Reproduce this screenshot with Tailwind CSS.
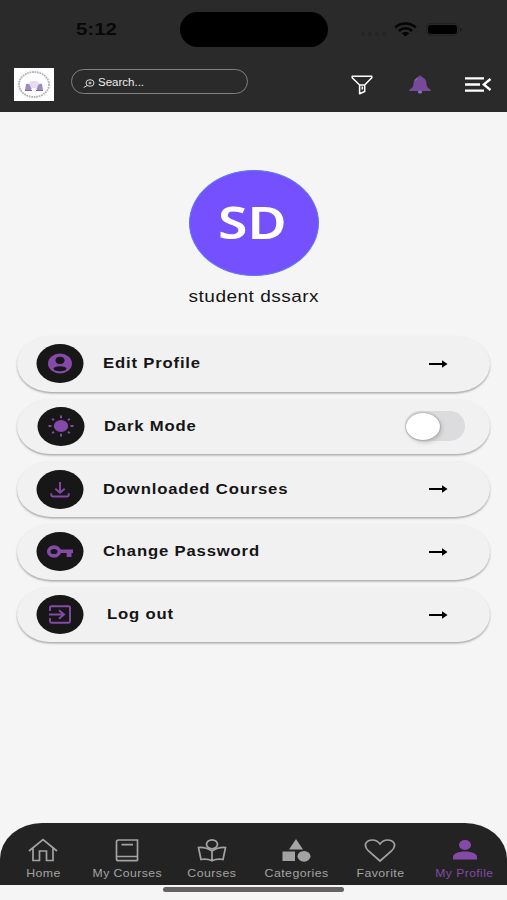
<!DOCTYPE html>
<html lang="en">
<head>
    <meta charset="UTF-8">
    <meta name="viewport" content="width=device-width, initial-scale=1.0">
    <title>My Profile</title>
    <script src="https://cdn.jsdelivr.net/npm/@tailwindcss/browser@4"></script>
</head>
<body class="w-[507px] h-[900px] overflow-hidden flex flex-col bg-[#f5f5f5] font-['Liberation_Sans',Arial,sans-serif] text-[#151515]">
    <!-- Status bar + toolbar -->
    <header class="h-[111.5px] shrink-0 bg-[#2a2a2a]">
        <div class="h-[59px] flex items-center pl-[76px]">
            <span class="w-[104px] text-[17px] leading-none font-bold text-[#080808]"><span class="inline-block origin-left scale-x-[1.2]">5:12</span></span>
            <div class="w-[148px] h-[35px] rounded-full bg-black"></div>
            <div class="flex gap-[3px] ml-[33px] mt-2 w-[30px]">
                <i class="w-1 h-1 rounded-full bg-[#242424]"></i>
                <i class="w-1 h-1 rounded-full bg-[#242424]"></i>
                <i class="w-1 h-1 rounded-full bg-[#242424]"></i>
                <i class="w-1 h-1 rounded-full bg-[#242424]"></i>
            </div>
            <svg class="w-[23px] h-[15px] ml-[3px]" viewBox="0 0 23 15" fill="none" stroke="#050505" stroke-width="2.6">
                <path d="M1.2 5.5C7 .2 16 .2 21.800 5.500M4.900 9C8.700 5.400 14.300 5.400 18.100 9"/>
                <path d="M11.500 14.500 7.600 11.300C9.800 9.500 13.200 9.500 15.400 11.300Z" fill="#050505" stroke="none"/>
            </svg>
            <div class="ml-[9px] w-[33px] h-[13px] rounded-[5px] border border-[#202020] p-px"><div class="w-full h-full rounded-[3px] bg-black"></div></div>
            <div class="ml-px w-[2px] h-1 rounded-r bg-[#1c1c1c]"></div>
        </div>
        <div class="h-[51px] flex items-center pl-[14px]">
            <svg class="w-10 h-[33px]" viewBox="0 0 40 33" fill="none">
                <path fill="#fff" d="M0 0h40v33H0z"/>
                <ellipse cx="20" cy="16.500" rx="15" ry="12.500" stroke="#b5b1bb" stroke-width="1.800" stroke-dasharray="1.800 .7"/>
                <ellipse cx="20" cy="16.500" rx="17" ry="14.500" stroke="#ececf0" stroke-width=".6"/>
                <path d="M12 16c2-1 4 0 6 3l-1 3h-6zM28 16c-2-1-4 0-6 3l1 3h6z" fill="#9c8bc4"/>
                <path d="M15 15c2-3 8-3 10 0l-2 5h-6z" fill="#e6dcf1"/>
                <path d="M11 22.500h7M22 22.500h7" stroke="#756b94"/>
            </svg>
            <div class="ml-[17px] mb-[6px] w-[177px] h-[25px] rounded-full border border-[#808080] flex items-center pl-[11px] pt-[3px]">
                <svg class="w-[12px] h-[9px]" viewBox="0 0 12 9" fill="none" stroke="#ddd">
                    <ellipse cx="7" cy="4" rx="4" ry="3.300"/>
                    <path d="M4 6.500.6 8.700M5.500 4h3M7 2.700v2.600"/>
                </svg>
                <span class="ml-[3px] text-[10px] leading-none text-[#ededed]"><span class="inline-block origin-left scale-x-[1.15]">Search...</span></span>
            </div>
            <svg class="ml-[103px] w-[22px] h-[20px]" viewBox="0 0 22 20" fill="none" stroke="#fff" stroke-width="1.500" stroke-linejoin="round">
                <path d="M1.200 1.300h19.600v1.500L13.700 10v6.500L8.600 18.800V10L1.200 2.800zM8.600 10h5.100M11.300 11.500v3"/>
            </svg>
            <svg class="ml-[36px] w-[22px] h-[19px]" viewBox="0 0 22 19">
                <path fill="#77499a" d="M9.200 2C9.200.3 12.800.3 12.800 2 16 3 17.300 5.200 17.400 8.500 17.500 11.500 19 13.500 21.500 14.600V16H.5V14.600C3 13.500 4.500 11.500 4.600 8.500 4.700 5.200 6 3 9.200 2Z"/>
                <ellipse cx="11" cy="17" rx="2.200" ry="1.600" fill="#8b73c0"/>
                <path d="M6.500 5.500C7 4.200 8 3.500 9 3.300" stroke="#9a7abb" fill="none"/>
            </svg>
            <svg class="ml-[33px] w-[28px] h-[17px]" viewBox="0 0 28 17" fill="none" stroke="#fff" stroke-width="2.300">
                <path d="M1 2.300h19M1 8.500h15M1 14.700h19M26.500 3l-6.700 5.500 6.700 5.500"/>
            </svg>
        </div>
    </header>

    <!-- Profile -->
    <section class="h-[224.5px] shrink-0 pt-[58px] flex flex-col items-center">
        <div class="w-[130px] h-[106.5px] rounded-[50%] bg-[#7450ff] border border-[#5c78f5] flex items-center justify-center text-white font-['Noto_Sans'] font-semibold text-[45px] leading-none">
            <span class="inline-block scale-x-[1.19] -translate-x-[1.5px] -translate-y-px">SD</span>
        </div>
        <p class="mt-[12px] text-[16px] leading-[18px] tracking-[.4px]"><span class="inline-block scale-x-[1.19]">student dssarx</span></p>
    </section>

    <!-- Settings -->
    <main class="px-[17px] flex flex-col gap-[7.200px] text-[14px] font-bold tracking-[.7px]">
        <div class="h-[55.500px] shrink-0 flex items-center pl-[18.500px] pr-[42px] rounded-[34px/28px] bg-[#f1f1f1] shadow-[0_1.500px_2px_#aaa]">
            <svg class="w-[48px] h-[39px]" viewBox="0 0 48 39" fill="none">
                <ellipse cx="24" cy="19.500" rx="23.500" ry="19.500" fill="#171717"/>
                <ellipse cx="24" cy="19.500" rx="12" ry="10" fill="#8549a8"/>
                <ellipse cx="24" cy="16.300" rx="4.500" ry="3.600" fill="#171717"/>
                <ellipse cx="24" cy="24.800" rx="6.500" ry="2.500" fill="#171717"/>
            </svg>
            <span class="ml-[19px] flex-1"><span class="inline-block origin-left scale-x-[1.19]">Edit Profile</span></span>
            <svg class="w-5 h-2" viewBox="0 0 20 8"><path d="M1 3h13V.3L19.500 4 14 7.700V5H1z"/></svg>
        </div>
        <div class="h-[55.500px] shrink-0 flex items-center pl-[19.500px] pr-[25px] rounded-[34px/28px] bg-[#f1f1f1] shadow-[0_1.500px_2px_#aaa]">
            <svg class="w-[48px] h-[39px]" viewBox="0 0 48 39" fill="none">
                <ellipse cx="24" cy="19.500" rx="23.500" ry="19.500" fill="#171717"/>
                <ellipse cx="24" cy="19" rx="7.200" ry="6" fill="#8549a8"/>
                <path d="M24 8.500v2.700M24 26.800v2.700M11.500 19h3M33.500 19h3M15.200 11.800l1.800 1.500M31 24.700l1.800 1.500M15.200 26.200l1.800-1.500M31 13.300l1.800-1.500" stroke="#8549a8" stroke-width="2"/>
            </svg>
            <span class="ml-[19px] flex-1"><span class="inline-block origin-left scale-x-[1.19]">Dark Mode</span></span>
            <div class="w-[60px] h-[30px] rounded-full bg-[#dcdcde] flex items-center">
                <div class="w-[34px] h-[27px] rounded-[50%] bg-white shadow-[0_0_2px_#777,2px_2px_4px_#bbb] ml-px"></div>
            </div>
        </div>
        <div class="h-[55.500px] shrink-0 flex items-center pl-[18.500px] pr-[42px] rounded-[34px/28px] bg-[#f1f1f1] shadow-[0_1.500px_2px_#aaa]">
            <svg class="w-[48px] h-[39px]" viewBox="0 0 48 39" fill="none" stroke="#8549a8" stroke-width="1.900">
                <ellipse cx="24" cy="19.500" rx="23.500" ry="19.500" fill="#171717" stroke="none"/>
                <path d="M24 12v10.500M19.300 18.700l4.700 4 4.700-4M15.300 23.300v1.700q0 1.500 2 1.500h13.400q2 0 2-1.500v-1.700"/>
            </svg>
            <span class="ml-[19px] flex-1"><span class="inline-block origin-left scale-x-[1.19] whitespace-nowrap">Downloaded Courses</span></span>
            <svg class="w-5 h-2" viewBox="0 0 20 8"><path d="M1 3h13V.3L19.500 4 14 7.700V5H1z"/></svg>
        </div>
        <div class="h-[55.500px] shrink-0 flex items-center pl-[18.500px] pr-[42px] rounded-[34px/28px] bg-[#f1f1f1] shadow-[0_1.500px_2px_#aaa]">
            <svg class="w-[48px] h-[39px]" viewBox="0 0 48 39" fill="none">
                <ellipse cx="24" cy="19.500" rx="23.500" ry="19.500" fill="#171717"/>
                <ellipse cx="18" cy="19.500" rx="5.300" ry="4.400" stroke="#8549a8" stroke-width="3.600"/>
                <path d="M24 17.500h13V21h-1.500v4h-4.800v-4H24z" fill="#8549a8"/>
            </svg>
            <span class="ml-[19px] flex-1"><span class="inline-block origin-left scale-x-[1.19] whitespace-nowrap">Change Password</span></span>
            <svg class="w-5 h-2" viewBox="0 0 20 8"><path d="M1 3h13V.3L19.500 4 14 7.700V5H1z"/></svg>
        </div>
        <div class="h-[55.500px] shrink-0 flex items-center pl-[18.500px] pr-[42px] rounded-[34px/28px] bg-[#f1f1f1] shadow-[0_1.500px_2px_#aaa]">
            <svg class="w-[48px] h-[39px]" viewBox="0 0 48 39" fill="none" stroke="#8549a8" stroke-width="1.900">
                <ellipse cx="24" cy="19.500" rx="23.500" ry="19.500" fill="#171717" stroke="none"/>
                <path d="M14 16v-3.300q0-1.500 1.800-1.500h16.400q1.800 0 1.800 1.500v13.600q0 1.500-1.800 1.500H15.800q-1.800 0-1.800-1.500V23M13 19.500h14M23 15.300l5 4.200-5 4.200"/>
            </svg>
            <span class="ml-[23px] flex-1"><span class="inline-block origin-left scale-x-[1.19]">Log out</span></span>
            <svg class="w-5 h-2" viewBox="0 0 20 8"><path d="M1 3h13V.3L19.500 4 14 7.700V5H1z"/></svg>
        </div>
    </main>

    <!-- Bottom navigation -->
    <nav class="mt-auto h-[62px] shrink-0 grid grid-cols-6 pl-px rounded-t-[42px_36px] bg-[#232323] text-[#a3a3a3] text-[11px] leading-[13px] tracking-[.4px] text-center">
        <a class="flex flex-col items-center pt-[14px]">
            <svg class="w-[30px] h-[26px]" viewBox="0 0 30 26" fill="none" stroke="currentColor" stroke-width="1.700">
                <path d="M1 14 15 2.500 29 14M5 11v12.500h6.500V14h7v9.500H25V11"/>
            </svg>
            <span class="mt-[4px] inline-block scale-x-[1.12]">Home</span>
        </a>
        <a class="flex flex-col items-center pt-[14px]">
            <svg class="w-[24px] h-[26px]" viewBox="0 0 24 26" fill="none" stroke="currentColor" stroke-width="1.700">
                <path d="M22.500 23.700H3.500q-2 0-2-2V5q0-2 2-2h19v20.700M2 19.500h20M6.500 7.700H18"/>
            </svg>
            <span class="mt-[4px] inline-block whitespace-nowrap scale-x-[1.11]">My Courses</span>
        </a>
        <a class="flex flex-col items-center pt-[14px]">
            <svg class="w-[30px] h-[26px]" viewBox="0 0 30 26" fill="none" stroke="currentColor" stroke-width="1.700">
                <ellipse cx="15" cy="7.300" rx="5.500" ry="4.500"/>
                <path d="M15 14Q9 10 1.500 10.500L4 22.500Q10 21.500 15 23.700 20 21.500 26 22.500L28.500 10.500Q21 10 15 14zM15 14v9"/>
            </svg>
            <span class="mt-[4px] inline-block scale-x-[1.12]">Courses</span>
        </a>
        <a class="flex flex-col items-center pt-[14px]">
            <svg class="w-[30px] h-[26px]" viewBox="0 0 30 26" fill="currentColor">
                <path d="M15 2 22 12.500H8zM1.500 14.500H14v9.500H1.500z"/>
                <ellipse cx="23" cy="19.300" rx="6.500" ry="5.400"/>
            </svg>
            <span class="mt-[4px] inline-block scale-x-[1.12]">Categories</span>
        </a>
        <a class="flex flex-col items-center pt-[14px]">
            <svg class="w-[32px] h-[26px]" viewBox="0 0 32 26" fill="none" stroke="currentColor" stroke-width="1.700">
                <path d="M16 24 4.500 14C-2 7.500 3 3 8.500 3Q13 3 16 7 19 3 23.500 3C29 3 34 7.500 27.500 14Z"/>
            </svg>
            <span class="mt-[4px] inline-block scale-x-[1.12]">Favorite</span>
        </a>
        <a class="flex flex-col items-center pt-[14px] text-[#8549a8]">
            <svg class="w-[26px] h-[26px]" viewBox="0 0 26 26" fill="currentColor">
                <ellipse cx="13" cy="8" rx="6" ry="4.900"/>
                <path d="M1 22.500V20C1 16 8 14.500 13 14.500S25 16 25 20v2.500z"/>
            </svg>
            <span class="mt-[4px] inline-block whitespace-nowrap scale-x-[1.1]">My Profile</span>
        </a>
    </nav>
    <div class="h-[15px] shrink-0 flex justify-center pt-[2px]">
        <div class="w-[181px] h-[5px] rounded-full bg-[#666263]"></div>
    </div>
</body>
</html>
